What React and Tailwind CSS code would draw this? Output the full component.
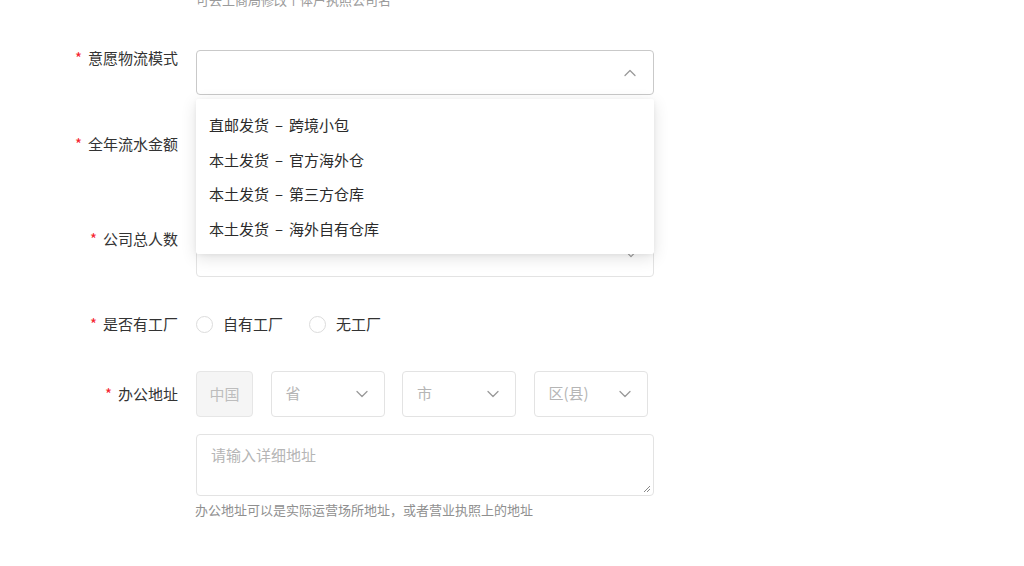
import React from "react";

const FONT = "font-['PingFang_SC','Noto_Sans_CJK_SC','Noto_Sans',sans-serif]";

function ChevronDown({ className }) {
  return (
    <svg className={className} viewBox="0 0 12 8" fill="none" stroke="currentColor" strokeWidth="1.3" strokeLinecap="round" strokeLinejoin="round">
      <path d="M1 1.5 L6 6.5 L11 1.5" />
    </svg>
  );
}

function ChevronUp({ className }) {
  return (
    <svg className={className} viewBox="0 0 12 8" fill="none" stroke="currentColor" strokeWidth="1.3" strokeLinecap="round" strokeLinejoin="round">
      <path d="M1 6.5 L6 1.5 L11 6.5" />
    </svg>
  );
}

function Label({ children, className = "" }) {
  return (
    <div className={`w-[178px] shrink-0 text-right text-[15px] leading-[16px] text-[#333] ${className}`}>
      <span className="text-[#f5222d] mr-[6px]">*</span>
      {children}
    </div>
  );
}

const options = [
  ["直邮发货", "跨境小包"],
  ["本土发货", "官方海外仓"],
  ["本土发货", "第三方仓库"],
  ["本土发货", "海外自有仓库"],
];

function Radio({ label }) {
  return (
    <div className="flex items-center gap-[10px]">
      <span className="w-[17px] h-[17px] rounded-full border border-[#dcdcdc] bg-white" />
      <span className="text-[15px] leading-[20px] text-[#333]">{label}</span>
    </div>
  );
}

function SmallSelect({ text }) {
  return (
    <div className="w-[114px] h-[46px] border border-[#e3e3e3] rounded-[4px] flex items-center justify-between pl-[14px] pr-[16px] bg-white">
      <span className="text-[15px] text-[#b5b5b5] leading-[20px] -mt-[2px]">{text}</span>
      <ChevronDown className="w-[12px] h-[8px] text-[#9a9a9a]" />
    </div>
  );
}

export default function App() {
  return (
    <div className={`relative w-[1024px] h-[566px] overflow-hidden bg-white ${FONT}`}>
      <div className="pl-[196px] -mt-[9px] text-[13px] leading-[18px] text-[#9b9b9b]">
        可去工商局修改个体户执照公司名
      </div>

      {/* Row 1 */}
      <div className="flex gap-[18px] mt-[41px] relative z-10">
        <Label>意愿物流模式</Label>
        <div className="relative">
          <div className="w-[458px] h-[45px] border border-[#c9c9c9] rounded-[4px] bg-white flex items-center justify-end pr-[17px]">
            <ChevronUp className="w-[12px] h-[8px] text-[#9a9a9a]" />
          </div>
          <div className="absolute top-[49px] left-0 w-[458px] bg-white rounded-[2px] shadow-[0_4px_16px_rgba(0,0,0,0.12),0_1px_4px_rgba(0,0,0,0.05)] pt-[9px] pb-[8px]">
            {options.map(([a, b]) => (
              <div key={a + b} className="h-[34.5px] flex items-center pl-[13px] text-[15px] text-[#2b2b2b]">
                <span>{a}</span>
                <span className="px-[6px]">–</span>
                <span>{b}</span>
              </div>
            ))}
          </div>
        </div>
      </div>

      {/* Row 2 */}
      <div className="flex gap-[18px] mt-[41px]">
        <Label>全年流水金额</Label>
        <div className="w-[458px] h-[44px] border border-[#e3e3e3] rounded-[4px] bg-white" />
      </div>

      {/* Row 3 */}
      <div className="flex gap-[18px] mt-[52px]">
        <Label className="-mt-[1px]">公司总人数</Label>
        <div className="w-[458px] h-[45px] border border-[#e3e3e3] rounded-[4px] bg-white flex items-center justify-end pr-[17px]">
          <ChevronDown className="w-[10px] h-[7px] text-[#9a9a9a]" />
        </div>
      </div>

      {/* Row 4 */}
      <div className="flex items-center gap-[18px] mt-[37px] h-[20px]">
        <Label>是否有工厂</Label>
        <div className="flex items-center gap-[26px]">
          <Radio label="自有工厂" />
          <Radio label="无工厂" />
        </div>
      </div>

      {/* Row 5 */}
      <div className="flex items-center gap-[18px] mt-[37px]">
        <Label>办公地址</Label>
        <div className="flex items-center gap-[17.5px]">
          <div className="w-[57px] h-[46px] border border-[#e6e6e6] rounded-[4px] bg-[#f5f5f5] flex items-center justify-center">
            <span className="text-[15px] text-[#bdbdbd] leading-[20px]">中国</span>
          </div>
          <SmallSelect text="省" />
          <SmallSelect text="市" />
          <SmallSelect text="区(县)" />
        </div>
      </div>

      <div className="pl-[196px] mt-[17px]">
        <div className="relative w-[458px] h-[62px] border border-[#e3e3e3] rounded-[4px] bg-white px-[14px] pt-[7px]">
          <span className="text-[15px] leading-[20px] text-[#b5b5b5]">请输入详细地址</span>
          <svg className="absolute right-[2px] bottom-[2px] w-[8px] h-[8px] text-[#888]" viewBox="0 0 8 8" stroke="currentColor" strokeWidth="1">
            <path d="M7 1 L1 7 M7 4 L4 7" />
          </svg>
        </div>
        <div className="mt-[5px] -ml-[1px] text-[13px] leading-[18px] text-[#8f8f8f]">
          办公地址可以是实际运营场所地址，或者营业执照上的地址
        </div>
      </div>
    </div>
  );
}
